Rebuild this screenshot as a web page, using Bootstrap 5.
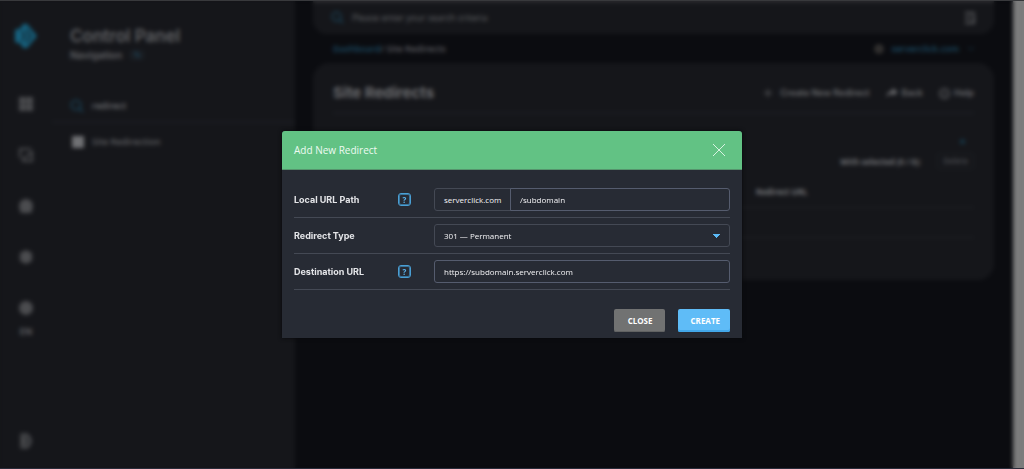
<!DOCTYPE html>
<html lang="en">
<head>
<meta charset="utf-8">
<meta name="viewport" content="width=device-width, initial-scale=1">
<title>Site Redirects - Control Panel</title>
<link href="https://cdn.jsdelivr.net/npm/bootstrap@5.3.0/dist/css/bootstrap.min.css" rel="stylesheet">
<style>
  body { background: #0b0c10; color: #5c5d60; font: 400 9px/14px "Open Sans", "Noto Sans", sans-serif; }
  a { color: #1d4d66; text-decoration: none; }
  svg { display: block; flex: none; }
  h1, h2 { margin: 0; font-family: Inter, sans-serif; }
  .side { background: #15161a; }
  .rail { width: 52px; padding: 24px 0 20px; color: #4b4c4f; }
  .rail-icons { margin-top: 49px; gap: 37px; }
  .rail a { color: inherit; }
  .rail .lang { font: 700 9px/10px Inter, sans-serif; margin-top: -25px; color: #5c5d60; }
  .nav-panel { width: 243px; padding-top: 24px; }
  .nav-head { padding-left: 18px; }
  .nav-head h1 { font-size: 17px; line-height: 24px; font-weight: 600; color: #606164; }
  .nav-head span { font: 600 10px/14px Inter, sans-serif; color: #626366; }
  .nav-line { padding-left: 18px; gap: 8px; height: 32px; border-bottom: 2px solid #1b1d22; margin-top: 29px; }
  .nav-item-line { padding-left: 18px; gap: 8px; height: 38px; color: #606164; font-weight: 600; }
  .plain-input { background: none; border: 0; padding: 0; color: #737477; font-weight: 600; outline: 0; }
  .plain-input::placeholder { color: #66676a; opacity: 1; }
  .top-search { background: #15161a; border-top: 3px solid #292a2d; border-radius: 0 0 14px 14px; height: 34px; padding: 0 18px 2px; gap: 8px; }
  .top-search .plain-input { font-weight: 400; }
  .main { padding: 0 19px 0 18px; }
  .crumbs { height: 29px; padding: 0 20px; font-weight: 600; }
  .panel { background: #15161a; border-radius: 16px; padding: 11px 20px 0; height: 217px; }
  .panel h2 { font-size: 15px; font-weight: 700; color: #6c6d70; }
  .panel-head { height: 40px; border-bottom: 2px solid #1b1d22; }
  .panel-head a { color: #68696c; font: 600 9px/14px Inter, sans-serif; }
  .pick-row { height: 24px; font-size: 8px; font-weight: 700; color: #717275; }
  .mini-btn { background: none; border: 1px solid #1e2024; border-radius: 3px; color: #494b4f; padding: 0 5px; font-weight: 600; }
  .redirects th, .redirects td { height: 30px; padding: 0; border-bottom: 1px solid #1f2125; color: #77787b; font-size: 8px; }
  .gutter { width: 11px; background: #7c7c7c; }
  .veil { backdrop-filter: blur(2px); -webkit-backdrop-filter: blur(2px); border-top: 1px solid #38393c; border-bottom: 1px solid #2a2c3a; }
  .dialog { width: 460px; max-width: 100%; margin: 0 auto; }
  .sheet { background: #272b34; border: 0; border-radius: 3px 3px 0 0; color: #e4e5e8; box-shadow: 0 0 4px #08090c; overflow: hidden; }
  .sheet-head { background: #62c284; border: 0; border-bottom: 1px solid #56956d; border-radius: 0; height: 39px; padding: 0 15px 0 12px; }
  .sheet-head h2 { font: 500 10px/16px "Open Sans", sans-serif; color: #eefaf2; }
  .x-btn { background: none; border: 0; padding: 0; color: #d8f2e1; }
  .sheet-body { padding: 12px 12px 0; }
  .field-row { height: 36px; border-bottom: 1px solid #444954; }
  .field-label { width: 140px; flex: none; font: 700 9px/14px Inter, sans-serif; }
  .with-help { width: 104px; }
  .help-btn { width: 13px; height: 13px; flex: none; border: 1px solid #4a9fd4; box-shadow: 0 0 0 1px #39759c inset; border-radius: 3px; background: none; color: #5bb5ee; padding: 0; font: 700 8px/11px "Open Sans", sans-serif; margin-right: 23px; }
  .field { height: 23px; min-height: 0; background-color: #272b34; border: 1px solid #555c6e; border-radius: 3px; color: #f4f4f6; font: 500 8px/14px "Open Sans", sans-serif; padding: 0 9px; }
  .field:focus { background-color: #272b34; color: #fff; }
  .prefix { border-color: #444954; flex: none; width: 77px; }
  .form-select.field { border-color: #444954; background-image: conic-gradient(from -45deg at 50% 100%, #5bb9f5 90deg, transparent 0); background-size: 8px 4px; background-position: right 9px center; background-repeat: no-repeat; }
  .sheet-foot { padding: 19px 12px 6px; gap: 13px; }
  .act { height: 23px; border: 0; border-radius: 2px; padding: 0 10px 0 13px; color: #fff; font: 700 8px/12px "Open Sans", sans-serif; }
  .act-close { background: #717272; box-shadow: inset 0 -1px #616262; padding: 0 12px 0 14px; }
  .act-create { background: #5fbcf7; box-shadow: inset 0 -2px #43a8ea; }
</style>
</head>
<body>
<svg class="d-none" aria-hidden="true">
  <symbol id="search" viewBox="0 0 14 14"><circle cx="6" cy="6" r="4.7" fill="none" stroke="currentColor" stroke-width="1.8"/><path d="M9.5 9.5 13 13" stroke="currentColor" stroke-width="1.8"/></symbol>
</svg>

<div class="d-flex vh-100 overflow-hidden">
  <nav class="side rail d-flex flex-column align-items-center flex-shrink-0">
    <a href="#" aria-label="Home"><svg width="24" height="24" viewBox="0 0 24 24"><path d="M9 0h4l10 12-10 12H9l-2-4-6-2V6l6-2z" fill="#166482"/><path d="m7 7 4 5-4 5m5-12 5 7-5 7" fill="none" stroke="#15232b" stroke-width="2"/></svg></a>
    <div class="rail-icons d-flex flex-column align-items-center">
      <a href="#" aria-label="Dashboard"><svg width="14" height="14" viewBox="0 0 14 14" fill="currentColor"><path d="M0 0h14v14H0z"/><path d="M7 0v14M0 7h14" stroke="#2a2b2e"/></svg></a>
      <a href="#" aria-label="Sites"><svg width="14" height="14" viewBox="0 0 14 14" fill="none" stroke="currentColor" stroke-width="2"><path d="M1 10V1h11M4 13h9V4L4 11z"/></svg></a>
      <a href="#" aria-label="Account"><svg width="14" height="14" viewBox="0 0 14 14" fill="currentColor"><circle cx="7" cy="7" r="7"/><rect x="1" y="9" width="12" height="5" rx="2"/></svg></a>
      <a href="#" aria-label="Support"><svg width="14" height="14" viewBox="0 0 14 14" fill="currentColor"><path d="m7 0 6 3v8l-6 3-6-3V3z"/></svg></a>
      <a href="#" aria-label="Language"><svg width="14" height="14" viewBox="0 0 14 14" fill="currentColor"><circle cx="7" cy="7" r="7"/></svg></a>
      <a href="#" class="lang">EN</a>
    </div>
    <a href="#" class="mt-auto" aria-label="Log out"><svg width="12" height="16" viewBox="0 0 12 16" fill="none" stroke="currentColor" stroke-width="3"><path d="M2 2h5l3 4v4l-3 4H2zM5 5v6"/></svg></a>
  </nav>

  <aside class="side nav-panel flex-shrink-0">
    <div class="nav-head">
      <h1>Control Panel</h1>
      <div class="d-flex align-items-center gap-2"><span>Navigation</span><svg width="14" height="10" viewBox="0 0 14 10"><rect width="14" height="10" rx="3" fill="#1a1f25"/><path d="m5 2 4 5" stroke="#1d4358" stroke-width="2"/></svg></div>
    </div>
    <div class="nav-line d-flex align-items-center">
      <svg width="14" height="14" color="#193d50"><use href="#search"/></svg>
      <input class="plain-input flex-fill" type="text" value="redirect" aria-label="Search navigation">
    </div>
    <a href="#" class="nav-item-line d-flex align-items-center"><svg width="14" height="12" viewBox="0 0 14 12"><rect x="2" width="12" height="12" rx="1" fill="#707174"/></svg><span>Site Redirection</span></a>
  </aside>

  <main class="main flex-fill">
    <div class="top-search d-flex align-items-center">
      <svg width="13" height="13" color="#193d50"><use href="#search"/></svg>
      <input class="plain-input flex-fill" type="search" placeholder="Please enter your search criteria" aria-label="Search">
      <svg width="12" height="12" viewBox="0 0 12 12" fill="none" stroke="#58595c" stroke-width="2"><path d="M1 1h10M1 6h6M1 11h10M10 3v7"/></svg>
    </div>
    <div class="crumbs d-flex align-items-center justify-content-between">
      <div><a href="#">Dashboard</a>/ Site Redirects</div>
      <div class="d-flex align-items-center gap-2"><svg width="10" height="10" viewBox="0 0 10 10" fill="none" stroke="#3c3a38" stroke-width="3"><circle cx="5" cy="5" r="3"/></svg><a href="#">serverclick.com</a><svg width="7" height="5" viewBox="0 0 7 5" fill="none" stroke="#173444"><path d="m1 1 3 3 3-3"/></svg></div>
    </div>
    <section class="panel">
      <div class="panel-head d-flex align-items-center justify-content-between">
        <h2>Site Redirects</h2>
        <div class="d-flex align-items-center gap-3">
          <a href="#" class="d-flex gap-2 align-items-center"><svg width="8" height="8" viewBox="0 0 8 8" stroke="#404144" stroke-width="2"><path d="M4 0v8M0 4h8"/></svg>Create New Redirect</a>
          <a href="#" class="d-flex gap-1 align-items-center"><svg width="12" height="10" viewBox="0 0 12 10" fill="currentColor"><path d="M0 9c1-4 3-6 6-6V0l6 4-5 4V6C4 6 2 7 0 9z"/></svg>Back</a>
          <a href="#" class="d-flex gap-1 align-items-center"><svg width="11" height="11" viewBox="0 0 12 12" fill="none" stroke="#525356" stroke-width="2"><circle cx="6" cy="6" r="5"/><path d="M6 4v4"/></svg>Help</a>
        </div>
      </div>
      <div class="d-flex justify-content-end align-items-end pt-3 pe-2 mt-2"><svg width="7" height="7" viewBox="0 0 8 8" fill="#173444"><circle cx="4" cy="4" r="3"/></svg></div>
      <div class="pick-row d-flex justify-content-end align-items-end gap-3"><span>With selected (0 / 0):</span><button class="mini-btn" type="button">Delete</button></div>
      <table class="redirects w-100 mt-2">
        <colgroup><col style="width:66%"><col></colgroup>
        <thead><tr><td></td><th>Redirect URL</th></tr></thead>
        <tbody><tr><td></td><td></td></tr></tbody>
      </table>
    </section>
  </main>
  <div class="gutter flex-shrink-0"></div>
</div>

<div class="veil modal d-flex align-items-center" tabindex="-1" role="dialog" aria-labelledby="sheetTitle">
  <div class="dialog">
    <form class="sheet modal-content">
      <div class="sheet-head modal-header">
        <h2 id="sheetTitle">Add New Redirect</h2>
        <button type="button" class="x-btn" aria-label="Close dialog"><svg width="16" height="14" viewBox="0 0 16 14"><path d="m2 1 12 12M14 1 2 13" stroke="currentColor"/></svg></button>
      </div>
      <div class="sheet-body">
        <div class="field-row d-flex align-items-center">
          <label class="field-label with-help" for="path">Local URL Path</label>
          <button class="help-btn" type="button" aria-label="Help on local path">?</button>
          <div class="input-group flex-nowrap">
            <label class="input-group-text field prefix" for="path">serverclick.com</label>
            <input id="path" class="form-control field" type="text" value="/subdomain">
          </div>
        </div>
        <div class="field-row d-flex align-items-center">
          <label class="field-label" for="kind">Redirect Type</label>
          <select id="kind" class="form-select field"><option>301 — Permanent</option><option>302 — Temporary</option></select>
        </div>
        <div class="field-row d-flex align-items-center">
          <label class="field-label with-help" for="dest">Destination URL</label>
          <button class="help-btn" type="button" aria-label="Help on destination">?</button>
          <input id="dest" class="form-control field" type="text" value="https://subdomain.serverclick.com">
        </div>
      </div>
      <div class="sheet-foot d-flex justify-content-end">
        <button type="button" class="act act-close">CLOSE</button>
        <button type="submit" class="act act-create">CREATE</button>
      </div>
    </form>
  </div>
</div>
<script src="https://cdn.jsdelivr.net/npm/bootstrap@5.3.0/dist/js/bootstrap.bundle.min.js"></script>
</body>
</html>
